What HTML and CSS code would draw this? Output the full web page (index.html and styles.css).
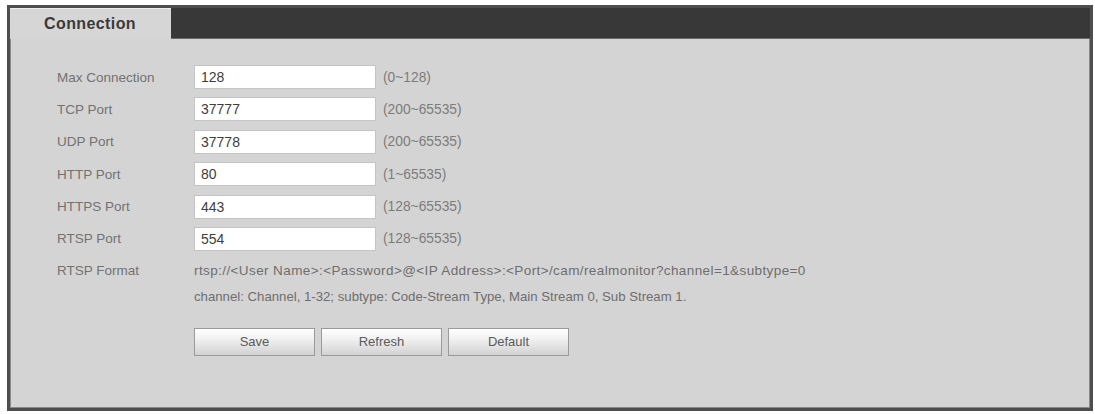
FILE: index.html
```html
<!DOCTYPE html>
<html>
<head>
<meta charset="utf-8">
<link rel="stylesheet" href="styles.css">
</head>
<body>
<div class="frame">
  <div class="tabbar">
    <div class="tab">Connection</div>
    <div class="tabfill"></div>
  </div>
  <div class="form">
    <div class="row">
      <div class="label">Max Connection</div>
      <div class="field">128</div>
      <div class="range">(0~128)</div>
    </div>
    <div class="row">
      <div class="label">TCP Port</div>
      <div class="field">37777</div>
      <div class="range">(200~65535)</div>
    </div>
    <div class="row">
      <div class="label">UDP Port</div>
      <div class="field">37778</div>
      <div class="range">(200~65535)</div>
    </div>
    <div class="row">
      <div class="label">HTTP Port</div>
      <div class="field">80</div>
      <div class="range">(1~65535)</div>
    </div>
    <div class="row">
      <div class="label">HTTPS Port</div>
      <div class="field">443</div>
      <div class="range">(128~65535)</div>
    </div>
    <div class="row">
      <div class="label">RTSP Port</div>
      <div class="field">554</div>
      <div class="range">(128~65535)</div>
    </div>
    <div class="row text-row first-text">
      <div class="label">RTSP Format</div>
      <div class="note note-wide">rtsp://&lt;User Name&gt;:&lt;Password&gt;@&lt;IP Address&gt;:&lt;Port&gt;/cam/realmonitor?channel=1&amp;subtype=0</div>
    </div>
    <div class="row text-row">
      <div class="label"></div>
      <div class="note">channel: Channel, 1-32; subtype: Code-Stream Type, Main Stream 0, Sub Stream 1.</div>
    </div>
    <div class="buttons">
      <div class="btn">Save</div>
      <div class="btn">Refresh</div>
      <div class="btn">Default</div>
    </div>
  </div>
</div>
</body>
</html>
```
FILE: styles.css
```css
html, body {
  margin: 0;
  padding: 0;
  background: #ffffff;
}
body {
  font-family: "Liberation Sans", Arial, sans-serif;
}
.frame {
  margin: 5px 2px 0 7px;
  width: 1080px;
  height: 400px;
  background: #d4d4d4;
  border: 3px solid #4e4e4e;
  box-shadow: inset 0 0 0 1px #8a8a8a;
}
.tabbar {
  display: flex;
  height: 31px;
}
.tab {
  width: 161px;
  box-sizing: border-box;
  padding-left: 34px;
  line-height: 30px;
  font-size: 16px;
  font-weight: bold;
  letter-spacing: 0.4px;
  color: #3a3a3a;
  background: #d6d6d6;
  border-top: 1px solid #ececec;
}
.tabfill {
  flex: 1;
  background: #383838;
  border-bottom: 1px solid #6a6a6a;
}
.form {
  padding: 26px 0 0 47px;
  display: flex;
  flex-direction: column;
  gap: 8.4px;
}
.row {
  display: flex;
  align-items: center;
  height: 24px;
}
.label {
  width: 137px;
  flex: none;
  font-size: 13.5px;
  color: #727272;
}
.field {
  width: 182px;
  height: 24px;
  box-sizing: border-box;
  background: #ffffff;
  border: 1px solid #c4c4c4;
  padding-left: 6px;
  font-size: 14px;
  line-height: 22px;
  color: #3e3e3e;
}
.range {
  margin-left: 7px;
  font-size: 13.8px;
  color: #7c7c7c;
}
.text-row {
  height: 17px;
}
.first-text {
  margin-top: 3px;
}
.note {
  font-size: 13.2px;
  color: #6e6e6e;
  white-space: nowrap;
}
.note-wide {
  font-size: 13.5px;
  letter-spacing: 0.4px;
}
.buttons {
  display: flex;
  gap: 6px;
  margin-left: 137px;
  margin-top: 15px;
}
.btn {
  width: 121px;
  height: 28px;
  box-sizing: border-box;
  border: 1px solid #9a9a9a;
  background: linear-gradient(#ffffff, #f0f0f0 40%, #d2d2d2);
  text-align: center;
  line-height: 26px;
  font-size: 13px;
  color: #5a5a5a;
}
```
